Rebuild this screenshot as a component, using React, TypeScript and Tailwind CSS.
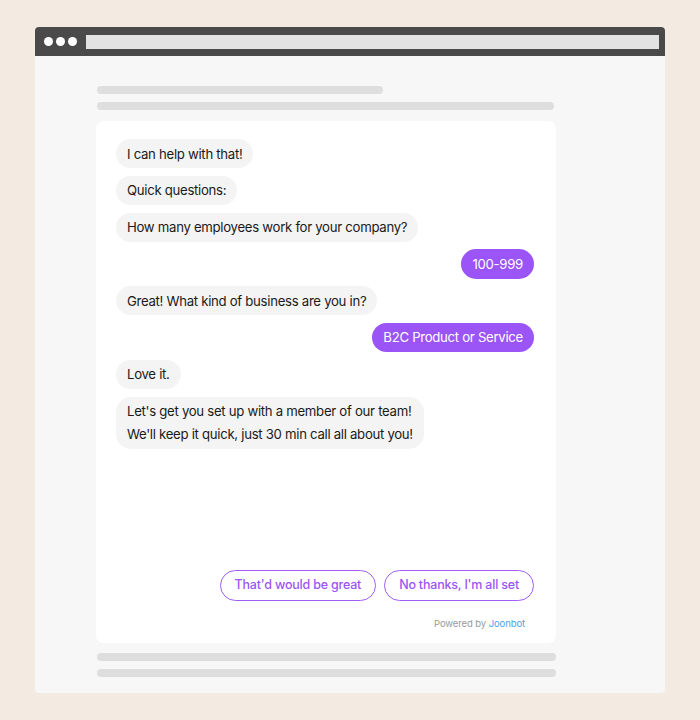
import React from "react";

const Bot = ({ children }: { children: React.ReactNode }) => (
  <div className="flex">
    <div className="rounded-[15px] bg-[#f4f4f4] px-[11px] pb-[3px] pt-[3.5px] text-[13.2px] leading-[22.8px] tracking-[-0.3px] text-[#1a1a1a]">
      {children}
    </div>
  </div>
);

const User = ({ children }: { children: React.ReactNode }) => (
  <div className="flex justify-end">
    <div className="rounded-[15px] bg-[#9b55f6] px-[11px] pb-[3px] pt-[3.5px] text-[13.2px] leading-[22.8px] tracking-[-0.3px] text-white">
      {children}
    </div>
  </div>
);

export default function App() {
  return (
    <div
      className="min-h-[720px] w-full bg-[#f3eae1] pt-[27px] pl-[35px]"
      style={{ fontFamily: "Inter, 'Noto Sans', sans-serif" }}
    >
      <div className="flex h-[666px] w-[630px] flex-col overflow-hidden rounded-[4px] bg-[#f7f7f7]">
        <div className="flex h-[29px] items-center bg-[#4a4a4a] pl-[9px] pr-[6px]">
          <div className="flex gap-[3px]">
            <div className="h-[9px] w-[9px] rounded-full bg-white" />
            <div className="h-[9px] w-[9px] rounded-full bg-white" />
            <div className="h-[9px] w-[9px] rounded-full bg-white" />
          </div>
          <div className="ml-[9px] h-[14px] flex-1 bg-[#e2e2e2]" />
        </div>
        <div className="flex flex-col pl-[61px] pt-[30px]">
          <div className="ml-[1px] h-[8px] w-[286px] rounded-full bg-[#dedede]" />
          <div className="ml-[1px] mt-[8px] h-[8px] w-[457px] rounded-full bg-[#dedede]" />
          <div className="mt-[11px] flex h-[522px] w-[460px] flex-col rounded-[8px] bg-white pl-[20px] pr-[22px] pt-[18px]">
            <div className="flex flex-col gap-[7.5px]">
              <Bot>I can help with that!</Bot>
              <Bot>Quick questions:</Bot>
              <Bot>How many employees work for your company?</Bot>
              <User>100-999</User>
              <Bot>Great! What kind of business are you in?</Bot>
              <User>B2C Product or Service</User>
              <Bot>Love it.</Bot>
              <Bot>
                Let's get you set up with a member of our team!
                <br />
                We'll keep it quick, just 30 min call all about you!
              </Bot>
            </div>
            <div className="mt-auto flex justify-end gap-[8px]">
              <button className="h-[31px] rounded-full border border-[#a15ef7] px-[14px] text-[12.5px] font-medium tracking-[-0.2px] text-[#9b55f6]">
                That'd would be great
              </button>
              <button className="h-[31px] rounded-full border border-[#a15ef7] px-[14px] text-[12.5px] font-medium tracking-[-0.2px] text-[#9b55f6]">
                No thanks, I'm all set
              </button>
            </div>
            <div className="mb-[12px] mt-[16px] pr-[9px] text-right text-[9.5px] leading-[14px] tracking-[-0.1px] text-[#9a9a9a]">
              Powered by <span className="text-[#4ba3e3]">Joonbot</span>
            </div>
          </div>
          <div className="ml-[1px] mt-[10px] h-[8px] w-[459px] rounded-full bg-[#dedede]" />
          <div className="ml-[1px] mt-[8px] h-[8px] w-[459px] rounded-full bg-[#dedede]" />
        </div>
      </div>
    </div>
  );
}
